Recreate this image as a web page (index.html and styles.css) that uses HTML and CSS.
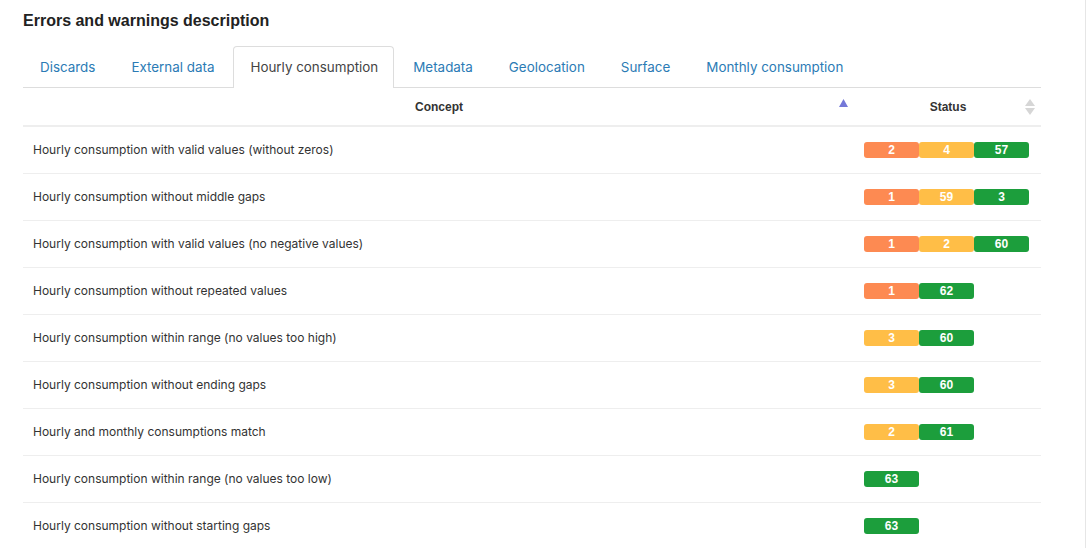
FILE: index.html
```html
<!DOCTYPE html>
<html>
<head>
<meta charset="utf-8">
<link rel="stylesheet" href="styles.css">
</head>
<body>
<div class="page">
  <h2 class="title">Errors and warnings description</h2>
  <ul class="tabs">
    <li class="tab">Discards</li>
    <li class="tab">External data</li>
    <li class="tab active">Hourly consumption</li>
    <li class="tab">Metadata</li>
    <li class="tab">Geolocation</li>
    <li class="tab">Surface</li>
    <li class="tab">Monthly consumption</li>
  </ul>
  <table class="grid">
    <colgroup><col class="c-concept"><col class="c-status"></colgroup>
    <thead>
      <tr>
        <th class="th">Concept<svg class="sort-asc" width="9" height="8" viewBox="0 0 9 8"><path d="M4.5 0 L9 8 L0 8 Z" fill="#7478d8"/></svg></th>
        <th class="th">Status<svg class="sort-both" width="10" height="16" viewBox="0 0 10 16"><path d="M5 0 L10 7 L0 7 Z" fill="#d6d6d6"/><path d="M0 9 L10 9 L5 16 Z" fill="#d6d6d6"/></svg></th>
      </tr>
    </thead>
    <tbody>
      <tr><td class="concept">Hourly consumption with valid values (without zeros)</td><td class="status"><div class="bar"><span class="seg o">2</span><span class="seg y">4</span><span class="seg g">57</span></div></td></tr>
      <tr><td class="concept">Hourly consumption without middle gaps</td><td class="status"><div class="bar"><span class="seg o">1</span><span class="seg y">59</span><span class="seg g">3</span></div></td></tr>
      <tr><td class="concept">Hourly consumption with valid values (no negative values)</td><td class="status"><div class="bar"><span class="seg o">1</span><span class="seg y">2</span><span class="seg g">60</span></div></td></tr>
      <tr><td class="concept">Hourly consumption without repeated values</td><td class="status"><div class="bar"><span class="seg o">1</span><span class="seg g">62</span></div></td></tr>
      <tr><td class="concept">Hourly consumption within range (no values too high)</td><td class="status"><div class="bar"><span class="seg y">3</span><span class="seg g">60</span></div></td></tr>
      <tr><td class="concept">Hourly consumption without ending gaps</td><td class="status"><div class="bar"><span class="seg y">3</span><span class="seg g">60</span></div></td></tr>
      <tr><td class="concept">Hourly and monthly consumptions match</td><td class="status"><div class="bar"><span class="seg y">2</span><span class="seg g">61</span></div></td></tr>
      <tr><td class="concept">Hourly consumption within range (no values too low)</td><td class="status"><div class="bar"><span class="seg g">63</span></div></td></tr>
      <tr><td class="concept">Hourly consumption without starting gaps</td><td class="status"><div class="bar"><span class="seg g">63</span></div></td></tr>
    </tbody>
  </table>
</div>
</body>
</html>
```
FILE: styles.css
```css
html, body {
  margin: 0;
  padding: 0;
  background: #fff;
}
body {
  font-family: Inter, "Liberation Sans", Arial, sans-serif;
  color: #333;
  overflow: hidden;
}
.page {
  width: 1018px;
  height: 548px;
  padding: 0 44px 0 23px;
  border-right: 1px solid #e6e6e6;
  box-sizing: content-box;
}
.title {
  margin: 0;
  padding-top: 11px;
  height: 35px;
  font-family: "Liberation Sans", Arial, sans-serif;
  font-size: 16px;
  line-height: 19px;
  font-weight: bold;
  color: #222;
}
.tabs {
  list-style: none;
  margin: 0;
  padding: 0;
  display: flex;
  border-bottom: 1px solid #ddd;
  height: 41px;
}
.tab {
  padding: 0 16px;
  margin-right: 2px;
  font-size: 13.4px;
  color: #2b7bb5;
  border: 1px solid transparent;
  border-bottom: none;
  box-sizing: border-box;
  height: 42px;
  line-height: 40px;
}
.tab.active {
  color: #444;
  border-color: #ddd;
  border-radius: 4px 4px 0 0;
  background: #fff;
  padding-right: 15px;
}
.grid {
  width: 1018px;
  border-collapse: collapse;
  table-layout: fixed;
  font-size: 12px;
}
.c-concept { width: 832px; }
.c-status { width: 186px; }
.th {
  position: relative;
  height: 37px;
  padding: 0;
  font-family: "Liberation Sans", Arial, sans-serif;
  font-weight: bold;
  font-size: 12px;
  color: #333;
  text-align: center;
  border-bottom: 2px solid #eee;
}
.sort-asc {
  position: absolute;
  right: 7px;
  top: 11px;
}
.sort-both {
  position: absolute;
  right: 6px;
  top: 11px;
}
td {
  height: 44px;
  padding: 0 0 2px 0;
  border-bottom: 1px solid #eee;
}
.concept {
  padding-left: 10px;
  color: #333;
}
.status {
  padding-left: 9px;
}
.bar {
  display: flex;
  margin-top: 2px;
}
.seg {
  width: 55px;
  height: 16px;
  line-height: 16px;
  text-align: center;
  color: #fff;
  font-family: "Liberation Sans", Arial, sans-serif;
  font-weight: bold;
  font-size: 12px;
  border-radius: 3px;
}
.seg.o { background: #fd8a52; }
.seg.y { background: #ffbe47; }
.seg.g { background: #1c9e3c; }
```
